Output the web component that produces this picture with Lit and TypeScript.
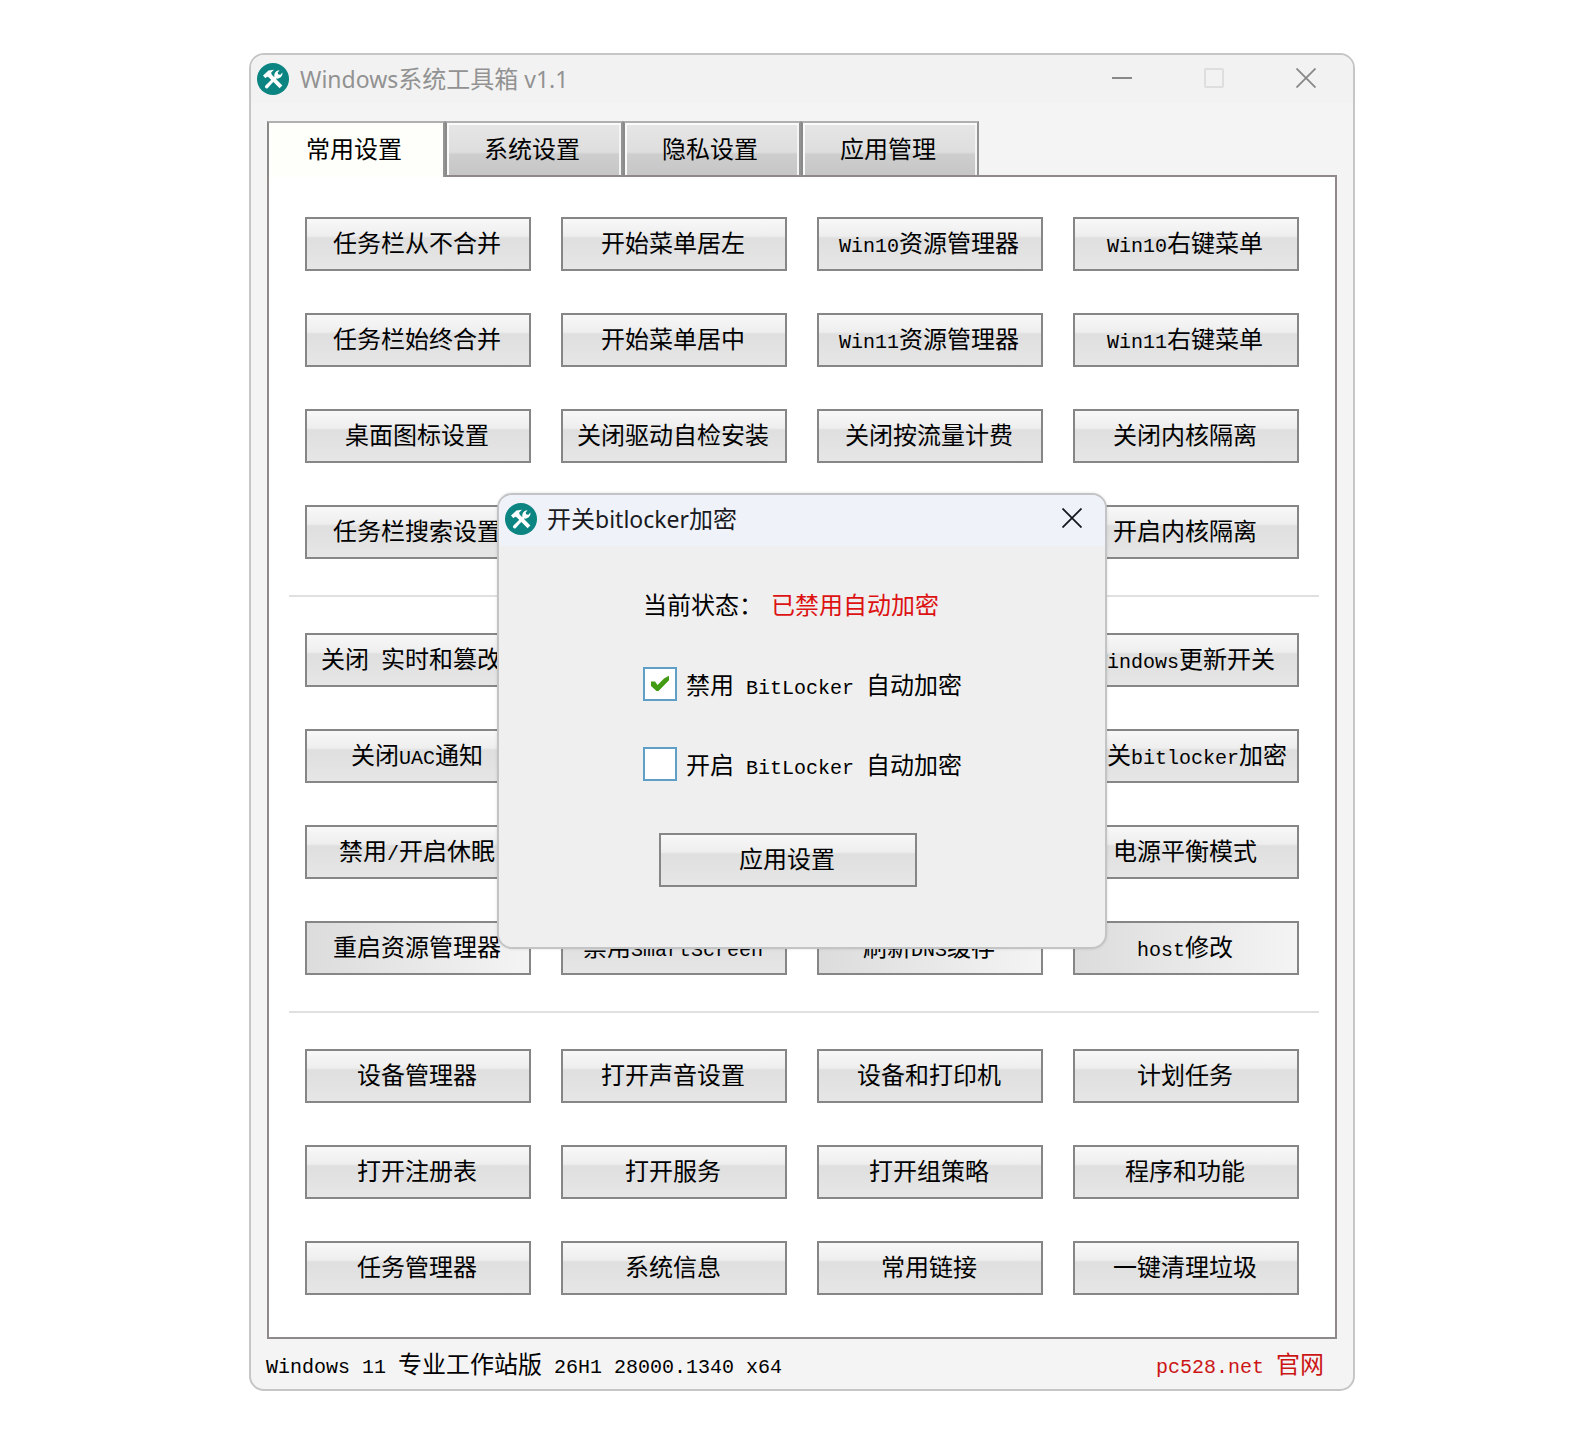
import { LitElement, html, css, svg, nothing } from "lit";
import { customElement, property, state } from "lit/decorators.js";

/** Splits a label so that half-width runs are set in the narrow monospace face. */
const label = (text: string) =>
  text
    .split(/([\x20-\x7e]+)/)
    .filter((part) => part !== "")
    .map((part) => (/^[\x20-\x7e]/.test(part) ? html`<span class="half">${part}</span>` : part));

const textStyles = css`
  .half {
    font-family: "Liberation Mono", monospace;
    font-size: 20px;
    line-height: 20px;
    white-space: pre;
  }
`;

const buttonStyles = css`
  .btn {
    box-sizing: border-box;
    height: 54px;
    padding: 0 2px 4px 0;
    border: 2px solid #868686;
    border-radius: 0;
    background: linear-gradient(#f8f8f8 0, #eeeeee 34%, #dfdfdf 38%, #e6e6e6 100%);
    color: #000;
    font: 24px/32px "Noto Sans CJK SC", sans-serif;
    white-space: nowrap;
  }
  .btn.side {
    background: linear-gradient(90deg, #dcdcdc, #f4f4f4);
  }
`;

@customElement("tool-logo")
class ToolLogo extends LitElement {
  static styles = css`
    :host {
      display: block;
      width: 32px;
      height: 32px;
    }
    svg {
      display: block;
    }
  `;
  render() {
    return svg`<svg width="32" height="32" viewBox="0 0 32 32" aria-hidden="true">
      <circle cx="16" cy="16" r="16" fill="#0b8482"/>
      <g fill="#fff">
        <path d="M6 12.5 11.5 7.5 17 6.8 14.2 9.4 14.6 11.6 25.4 22.4 22.6 25.2 11.6 14.2 10 13.8 8.4 15.2Z"/>
        <path d="M8.2 22.8 17.4 13.8C16.6 10.4 19 7.2 22.6 7.2L20.6 9.8 21.4 11.6 23.4 11.8 25.4 9.6C26 13 23 16 19.4 15.6L10.6 25.2C8.8 26 7.4 24.4 8.2 22.8Z"/>
      </g>
    </svg>`;
  }
}

const closeIcon = svg`<svg width="20" height="20" viewBox="0 0 20 20" aria-hidden="true"><path d="M.5.5l19 19M19.5.5l-19 19" stroke="currentColor" stroke-width="1.8" fill="none"/></svg>`;

@customElement("bitlocker-dialog")
class BitlockerDialog extends LitElement {
  @state() private choice = "off";

  static styles = [
    textStyles,
    buttonStyles,
    css`
      :host {
        display: block;
        box-sizing: border-box;
        width: 610px;
        border: 2px solid #c3c4c6;
        border-radius: 15px;
        overflow: hidden;
        background: #efefef;
        box-shadow: 0 0 3px rgba(0, 0, 0, 0.12);
        color: #000;
        font: 24px/32px "Noto Sans CJK SC", sans-serif;
      }
      .bar {
        display: flex;
        align-items: center;
        gap: 10px;
        height: 48px;
        padding: 0 23px 3px 6px;
        background: #eff3f9;
      }
      .title {
        flex: 1;
        margin: 0;
        color: #1a1a1e;
        font: 24px/32px "Noto Sans", "Noto Sans CJK SC", sans-serif;
      }
      .title .latin {
        font-size: 23px;
      }
      .close {
        display: flex;
        padding: 0 0 2px;
        border: 0;
        background: none;
        color: #16181c;
      }
      .body {
        display: flex;
        flex-direction: column;
        align-items: flex-start;
        padding: 42px 0 60px 144px;
      }
      .status {
        display: flex;
        gap: 8px;
        margin: 0 0 47px;
      }
      .status strong {
        color: #dd1212;
        font-weight: 400;
      }
      .option {
        display: flex;
        align-items: center;
        gap: 9px;
        height: 34px;
        margin-bottom: 46px;
      }
      .option input {
        appearance: none;
        box-sizing: border-box;
        display: grid;
        place-items: center;
        width: 34px;
        height: 34px;
        margin: 0;
        border: 2px solid #5f9fc6;
        background: #fff;
      }
      .option svg {
        display: none;
      }
      .box {
        display: grid;
        place-items: center;
      }
      .box > * {
        grid-area: 1 / 1;
      }
      .option input:checked + svg {
        display: block;
        pointer-events: none;
      }
      .apply {
        width: 258px;
        margin: 6px 0 0 16px;
      }
    `,
  ];

  private option(id: string, text: string) {
    return html`<label class="option">
      <span class="box">
        <input
          type="checkbox"
          .checked=${this.choice === id}
          @change=${() => (this.choice = this.choice === id ? "" : id)}
        />
        <svg width="20" height="18" viewBox="0 0 20 18" aria-hidden="true">
          <path d="M1 6.5h4l2.5 3.5L14 3.5 19 .8v4.4L8.5 16h-2L1 11Z" fill="#419b13" />
        </svg>
      </span>
      <span>${label(text)}</span>
    </label>`;
  }

  render() {
    return html`
      <header class="bar">
        <tool-logo></tool-logo>
        <h2 class="title">开关<span class="latin">bitlocker</span>加密</h2>
        <button class="close" aria-label="关闭">${closeIcon}</button>
      </header>
      <div class="body">
        <p class="status"><span>当前状态：</span><strong>已禁用自动加密</strong></p>
        ${this.option("off", "禁用 BitLocker 自动加密")}
        ${this.option("on", "开启 BitLocker 自动加密")}
        <button class="btn apply">应用设置</button>
      </div>
    `;
  }
}

type Cell = string | null;

const TABS = ["常用设置", "系统设置", "隐私设置", "应用管理"];

const GROUPS: Cell[][][] = [
  [
    ["任务栏从不合并", "开始菜单居左", "Win10资源管理器", "Win10右键菜单"],
    ["任务栏始终合并", "开始菜单居中", "Win11资源管理器", "Win11右键菜单"],
    ["桌面图标设置", "关闭驱动自检安装", "关闭按流量计费", "关闭内核隔离"],
    ["任务栏搜索设置", null, null, "开启内核隔离"],
  ],
  [
    ["关闭 实时和篡改 ", null, null, "Windows更新开关"],
    ["关闭UAC通知", null, null, "开关bitlocker加密"],
    ["禁用/开启休眠", null, null, "电源平衡模式"],
    ["重启资源管理器", "禁用SmartScreen", "刷新DNS缓存", "host修改"],
  ],
  [
    ["设备管理器", "打开声音设置", "设备和打印机", "计划任务"],
    ["打开注册表", "打开服务", "打开组策略", "程序和功能"],
    ["任务管理器", "系统信息", "常用链接", "一键清理垃圾"],
  ],
];

const SIDE_LIT = new Set<Cell>(["重启资源管理器", "刷新DNS缓存", "host修改"]);

@customElement("tool-group")
class ToolGroup extends LitElement {
  @property({ attribute: false }) rows: Cell[][] = [];

  static styles = [
    textStyles,
    buttonStyles,
    css`
      :host {
        display: grid;
        grid-template-columns: repeat(4, minmax(0, 1fr));
        gap: 42px 30px;
        padding: 0 16px;
      }
    `,
  ];

  render() {
    return this.rows.flat().map((cell) =>
      cell === null
        ? html`<span></span>`
        : html`<button class="btn ${SIDE_LIT.has(cell) ? "side" : ""}">${label(cell)}</button>`
    );
  }
}

@customElement("app-root")
class AppRoot extends LitElement {
  @state() private tab = 0;

  static styles = [
    textStyles,
    css`
      :host {
        display: block;
        box-sizing: border-box;
        min-height: 100vh;
        padding: 53px 240px 58px 249px;
        background: #fff;
        color: #000;
        font: 24px/32px "Noto Sans CJK SC", sans-serif;
      }
      .window {
        position: relative;
        border: 2px solid #c6c6c6;
        border-radius: 15px;
        background: #f4f4f4;
      }
      .bar {
        display: flex;
        align-items: center;
        gap: 11px;
        height: 48px;
        padding: 0 37px 0 6px;
        border-radius: 13px 13px 0 0;
        background: #f2f2f2;
      }
      .title {
        flex: 1;
        margin: 0;
        color: #929292;
        font: 24px/32px "Noto Sans", "Noto Sans CJK SC", sans-serif;
      }
      .title .latin {
        font-size: 23px;
      }
      .controls {
        display: flex;
        gap: 72px;
        padding-bottom: 2px;
        color: #888;
      }
      .controls button {
        display: flex;
        padding: 0;
        border: 0;
        background: none;
        color: inherit;
      }
      .main {
        padding: 18px 16px 0;
      }
      .tabs {
        display: flex;
        position: relative;
        margin-bottom: -2px;
      }
      .tab {
        box-sizing: border-box;
        width: 178px;
        height: 56px;
        padding: 0 4px 2px 0;
        border: 2px solid;
        border-color: #b0b0b0 #939393 #8f8888 #8a8a8a;
        border-radius: 0;
        background: linear-gradient(#e6e6e6 0, #dedede 56%, #cecece 60%, #c6c6c6 100%);
        box-shadow: inset 2px 2px #fafafa, inset -2px 0 #f4f4f4;
        color: #000;
        font: 24px/32px "Noto Sans CJK SC", sans-serif;
      }
      .tab.active {
        padding-bottom: 4px;
        border-bottom: 0;
        background: #fefffb;
        box-shadow: none;
      }
      .panel {
        border: 2px solid #908989;
        padding: 40px 16px 42px 20px;
        background: #fff;
      }
      .panel tool-group {
        padding-right: 20px;
      }
      .rule {
        height: 2px;
        margin: 36px 0;
        border: 0;
        background: #e0e0e0;
      }
      .foot {
        display: flex;
        justify-content: space-between;
        padding: 8px 29px 10px 15px;
      }
      .foot a {
        color: #cc1616;
        text-decoration: none;
      }
      .overlay {
        position: absolute;
        inset: 0 0 2px;
        display: grid;
        place-items: center;
      }
    `,
  ];

  render() {
    return html`
      <section class="window">
        <header class="bar">
          <tool-logo></tool-logo>
          <h1 class="title">
            <span class="latin">Windows</span>系统工具箱<span class="latin"> v1.1</span>
          </h1>
          <div class="controls">
            <button aria-label="最小化">
              <svg width="20" height="20" viewBox="0 0 20 20"><path d="M0 10h20" stroke="currentColor" stroke-width="2" /></svg>
            </button>
            <button aria-label="最大化" disabled>
              <svg width="20" height="20" viewBox="0 0 20 20">
                <rect x="1" y="1" width="18" height="18" rx="1" fill="none" stroke="#dedede" stroke-width="2" />
              </svg>
            </button>
            <button aria-label="关闭">${closeIcon}</button>
          </div>
        </header>
        <div class="main">
          <nav class="tabs" role="tablist">
            ${TABS.map(
              (name, i) => html`<button
                class="tab ${i === this.tab ? "active" : ""}"
                role="tab"
                aria-selected=${i === this.tab}
                @click=${() => (this.tab = i)}
              >
                ${name}
              </button>`
            )}
          </nav>
          <div class="panel">
            ${GROUPS.map(
              (rows, i) => html`${i ? html`<hr class="rule" />` : nothing}<tool-group .rows=${rows}></tool-group>`
            )}
          </div>
        </div>
        <footer class="foot">
          <span>${label("Windows 11 专业工作站版 26H1 28000.1340 x64")}</span>
          <a href="#">${label("pc528.net 官网")}</a>
        </footer>
        <div class="overlay"><bitlocker-dialog></bitlocker-dialog></div>
      </section>
    `;
  }
}
